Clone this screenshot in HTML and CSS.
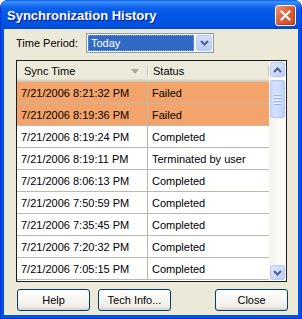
FILE: index.html
```html
<!DOCTYPE html>
<html lang="en">
<head>
<meta charset="UTF-8">
<title>Synchronization History</title>
<link rel="stylesheet" href="styles.css">
</head>
<body>
  <div class="window">
    <!-- Title bar -->
    <div class="titlebar">
      <span class="title">Synchronization History</span>
      <button class="close-btn" type="button">
        <svg width="11" height="11" viewBox="0 0 11 11">
          <path d="M1.5 1.5 L9.5 9.5 M9.5 1.5 L1.5 9.5" stroke="#fff" stroke-width="2.2" stroke-linecap="square"/>
        </svg>
      </button>
    </div>

    <div class="client">
      <!-- Time period picker -->
      <div class="period-row">
        <label class="period-label">Time Period:</label>
        <div class="combo">
          <span class="combo-value">Today</span>
          <span class="combo-btn">
            <svg width="9" height="6" viewBox="0 0 9 6">
              <path d="M1 1 L4.5 4.5 L8 1" stroke="#4D6185" stroke-width="2" fill="none"/>
            </svg>
          </span>
        </div>
      </div>

      <!-- History list -->
      <div class="list">
        <div class="list-main">
          <div class="list-header">
            <div class="hcol col-time">Sync Time<span class="sort-arrow"></span></div>
            <div class="hcol col-status">Status</div>
          </div>
          <div class="row failed"><div class="cell col-time">7/21/2006 8:21:32 PM</div><div class="cell col-status">Failed</div></div>
          <div class="row failed"><div class="cell col-time">7/21/2006 8:19:36 PM</div><div class="cell col-status">Failed</div></div>
          <div class="row"><div class="cell col-time">7/21/2006 8:19:24 PM</div><div class="cell col-status">Completed</div></div>
          <div class="row"><div class="cell col-time">7/21/2006 8:19:11 PM</div><div class="cell col-status">Terminated by user</div></div>
          <div class="row"><div class="cell col-time">7/21/2006 8:06:13 PM</div><div class="cell col-status">Completed</div></div>
          <div class="row"><div class="cell col-time">7/21/2006 7:50:59 PM</div><div class="cell col-status">Completed</div></div>
          <div class="row"><div class="cell col-time">7/21/2006 7:35:45 PM</div><div class="cell col-status">Completed</div></div>
          <div class="row"><div class="cell col-time">7/21/2006 7:20:32 PM</div><div class="cell col-status">Completed</div></div>
          <div class="row"><div class="cell col-time">7/21/2006 7:05:15 PM</div><div class="cell col-status">Completed</div></div>
        </div>
        <div class="scrollbar">
          <div class="scroll-btn">
            <svg width="9" height="6" viewBox="0 0 9 6"><path d="M1 5 L4.5 1.5 L8 5" stroke="#4D6185" stroke-width="2" fill="none"/></svg>
          </div>
          <div class="scroll-thumb">
            <span class="grip"></span><span class="grip"></span><span class="grip"></span><span class="grip"></span>
          </div>
          <div class="scroll-track"></div>
          <div class="scroll-btn">
            <svg width="9" height="6" viewBox="0 0 9 6"><path d="M1 1 L4.5 4.5 L8 1" stroke="#4D6185" stroke-width="2" fill="none"/></svg>
          </div>
        </div>
      </div>

      <!-- Dialog buttons -->
      <div class="buttons">
        <button class="xp-btn" type="button">Help</button>
        <button class="xp-btn" type="button">Tech Info...</button>
        <button class="xp-btn push-right" type="button">Close</button>
      </div>
    </div>
  </div>
</body>
</html>
```

FILE: styles.css
```css
html, body {
  margin: 0;
  padding: 0;
}

body {
  font-family: "Liberation Sans", Arial, sans-serif;
  font-size: 11px;
  color: #000000;
  background-color: #FFFFFF;
}

.window {
  width: 302px;
  height: 319px;
  box-sizing: border-box;
  display: flex;
  flex-direction: column;
  background-color: #0054E3;
  border: 1px solid #0831D9;
  border-top: none;
  border-radius: 8px 8px 0 0;
  overflow: hidden;
}

/* Title bar */
.titlebar {
  height: 29px;
  flex: none;
  display: flex;
  align-items: center;
  padding: 0 5px 0 6px;
  background: linear-gradient(#0A5FE8 0, #3D93FB 2px, #2A7CF6 4px, #0C60EB 8px, #0058E6 14px, #0055E3 22px, #0051DD 26px, #0048CC 29px);
}

.title {
  flex: 1;
  padding-top: 2px;
  color: #FFFFFF;
  font-weight: bold;
  font-size: 13px;
  text-shadow: 1px 1px #0A1883;
}

.close-btn {
  width: 21px;
  height: 21px;
  margin-top: 1px;
  padding: 0;
  display: flex;
  align-items: center;
  justify-content: center;
  border: 1px solid #FFFFFF;
  border-radius: 3px;
  background: linear-gradient(135deg, #F09576 0%, #E0663F 40%, #CC4A22 100%);
  box-shadow: inset -1px -1px 1px #B33A15;
}

/* Client area */
.client {
  flex: 1;
  margin: 0 3px 3px 3px;
  background-color: #ECE9D8;
  display: flex;
  flex-direction: column;
  padding: 4px 0 4px 12px;
}

.period-row {
  display: flex;
  align-items: center;
  height: 20px;
}

.period-label {
  width: 70px;
}

.combo {
  width: 128px;
  height: 20px;
  box-sizing: border-box;
  border: 1px solid #7F9DB9;
  background-color: #FFFFFF;
  display: flex;
  align-items: stretch;
  padding: 1px;
}

.combo-value {
  flex: 1;
  margin-right: 2px;
  background-color: #316AC5;
  color: #FFFFFF;
  font-size: 11px;
  padding-left: 2px;
  line-height: 15px;
  border: 1px dotted #6E95DA;
  box-sizing: border-box;
}

.combo-btn {
  width: 16px;
  display: flex;
  align-items: center;
  justify-content: center;
  border: 1px solid #B9CBF3;
  border-radius: 2px;
  background: linear-gradient(#D2DEFC, #B9CDFA);
  box-sizing: border-box;
}

/* List view */
.list {
  margin-top: 7px;
  width: 271px;
  height: 222px;
  box-sizing: border-box;
  border: 1px solid #1C1C1C;
  background-color: #FFFFFF;
  display: flex;
  overflow: hidden;
}

.list-main {
  flex: 1;
  display: flex;
  flex-direction: column;
}

.list-header {
  height: 21px;
  flex: none;
  display: flex;
  box-sizing: border-box;
  background-color: #EBEADB;
  box-shadow: inset 0 -1px #CBC7B8, inset 0 -2px #D6D2C2, inset 0 -3px #E2DECD;
}

.hcol {
  position: relative;
  display: flex;
  align-items: center;
  padding-bottom: 2px;
  box-sizing: border-box;
}

.list-header .col-time {
  padding-left: 7px;
}

.list-header .col-status {
  padding-left: 5px;
}

.hcol::after {
  content: "";
  position: absolute;
  right: 0;
  top: 4px;
  bottom: 6px;
  width: 1px;
  background-color: #C7C5B2;
  box-shadow: 1px 0 #FFFFFF;
}

.sort-arrow {
  position: absolute;
  right: 9px;
  top: 8px;
  width: 0;
  height: 0;
  border-left: 4px solid transparent;
  border-right: 4px solid transparent;
  border-top: 5px solid #ACA899;
}

.col-time {
  width: 131px;
}

.col-status {
  width: 121px;
}

.row {
  height: 22px;
  flex: none;
  display: flex;
  box-sizing: border-box;
  border-bottom: 1px solid #BDBAAB;
}

.row.failed {
  background-color: #F4A46A;
}

.cell {
  display: flex;
  align-items: center;
  box-sizing: border-box;
  white-space: nowrap;
  font-size: 11px;
}

.cell.col-time {
  padding-left: 4px;
  border-right: 1px solid #BDBAAB;
}

.cell.col-status {
  padding-left: 4px;
}

/* Scrollbar */
.scrollbar {
  width: 17px;
  flex: none;
  display: flex;
  flex-direction: column;
  background: linear-gradient(90deg, #F3F1EA, #FEFEFB);
}

.scroll-btn {
  height: 17px;
  flex: none;
  display: flex;
  align-items: center;
  justify-content: center;
  box-sizing: border-box;
  border: 1px solid #FFFFFF;
  border-radius: 3px;
  background: linear-gradient(135deg, #E2EAFE, #B9CCF9);
  box-shadow: inset 0 0 0 1px #B4C8F6;
}

.scroll-thumb {
  height: 40px;
  margin-top: 1px;
  flex: none;
  display: flex;
  flex-direction: column;
  align-items: center;
  justify-content: center;
  gap: 1px;
  box-sizing: border-box;
  border: 1px solid #FFFFFF;
  border-radius: 3px;
  background: linear-gradient(90deg, #C9D8FC, #D6E1FD 40%, #BCCFFA);
  box-shadow: inset 0 0 0 1px #B2C6F5;
}

.grip {
  width: 7px;
  height: 1px;
  background-color: #EEF4FE;
  box-shadow: 0 1px #8CB0F8;
  margin-bottom: 1px;
}

.scroll-track {
  flex: 1;
}

/* Buttons */
.buttons {
  margin-top: 7px;
  width: 271px;
  display: flex;
  gap: 8px;
  padding-left: 1px;
}

.xp-btn {
  width: 73px;
  height: 22px;
  padding: 0;
  font-family: "Liberation Sans", Arial, sans-serif;
  font-size: 11px;
  color: #000000;
  border: 1px solid #003C74;
  border-radius: 3px;
  background: linear-gradient(#FFFFFF, #F4F3EE 60%, #ECEBE6 85%, #D6D0C5);
}

.push-right {
  margin-left: auto;
}
```
